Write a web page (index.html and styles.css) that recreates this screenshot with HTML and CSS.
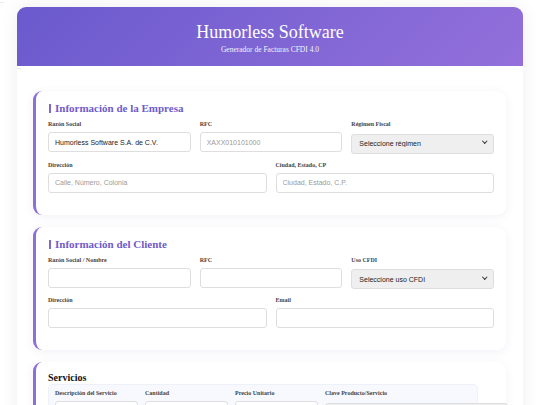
FILE: index.html
```html
<!DOCTYPE html>
<html lang="es">
<head>
<meta charset="utf-8">
<title>Humorless Software</title>
<link rel="stylesheet" href="styles.css">
</head>
<body>
<div class="dots">...</div>
<div class="container">
  <header class="header">
    <h1 class="title">Humorless Software</h1>
    <p class="subtitle">Generador de Facturas CFDI 4.0</p>
  </header>
  <div class="dots dots-inner">...</div>
  <main class="content">
    <section class="card">
      <h2 class="card-title">Información de la Empresa</h2>
      <div class="row row-3">
        <div class="group">
          <label class="label">Razón Social</label>
          <input class="field" type="text" value="Humorless Software S.A. de C.V.">
        </div>
        <div class="group">
          <label class="label">RFC</label>
          <input class="field" type="text" placeholder="XAXX010101000">
        </div>
        <div class="group">
          <label class="label">Régimen Fiscal</label>
          <div class="select-wrap"><select class="field select"><option>Seleccione régimen</option></select></div>
        </div>
      </div>
      <div class="row row-2">
        <div class="group">
          <label class="label">Dirección</label>
          <input class="field" type="text" placeholder="Calle, Número, Colonia">
        </div>
        <div class="group">
          <label class="label">Ciudad, Estado, CP</label>
          <input class="field" type="text" placeholder="Ciudad, Estado, C.P.">
        </div>
      </div>
    </section>

    <section class="card">
      <h2 class="card-title">Información del Cliente</h2>
      <div class="row row-3">
        <div class="group">
          <label class="label">Razón Social / Nombre</label>
          <input class="field" type="text">
        </div>
        <div class="group">
          <label class="label">RFC</label>
          <input class="field" type="text">
        </div>
        <div class="group">
          <label class="label">Uso CFDI</label>
          <div class="select-wrap"><select class="field select"><option>Seleccione uso CFDI</option></select></div>
        </div>
      </div>
      <div class="row row-2">
        <div class="group">
          <label class="label">Dirección</label>
          <input class="field" type="text">
        </div>
        <div class="group">
          <label class="label">Email</label>
          <input class="field" type="email">
        </div>
      </div>
    </section>

    <section class="card card-services">
      <h3 class="services-title">Servicios</h3>
      <div class="service-box">
        <div class="service-row">
          <div class="group">
            <label class="label">Descripción del Servicio</label>
            <input class="field" type="text">
          </div>
          <div class="group">
            <label class="label">Cantidad</label>
            <input class="field" type="text">
          </div>
          <div class="group">
            <label class="label">Precio Unitario</label>
            <input class="field" type="text">
          </div>
          <div class="group">
            <label class="label">Clave Producto/Servicio</label>
            <div class="select-wrap wide"><select class="field select"><option></option></select></div>
          </div>
        </div>
      </div>
    </section>
  </main>
</div>
</body>
</html>
```

FILE: styles.css
```css
* {
  box-sizing: border-box;
}

html, body {
  margin: 0;
  padding: 0;
  background: #ffffff;
  overflow: hidden;
}

body {
  font-family: "Liberation Serif", "Times New Roman", serif;
  color: #333;
}

.dots {
  font-family: "Liberation Sans", Arial, sans-serif;
  font-size: 4px;
  line-height: 4px;
  height: 7px;
  color: #777;
  letter-spacing: 0.3px;
}

.dots-inner {
  height: 4px;
}

.container {
  width: 506px;
  margin: 0 auto;
  background: #fff;
  border-radius: 9px 9px 0 0;
  box-shadow: 0 0 18px rgba(0, 0, 0, 0.07);
  min-height: 420px;
}

.header {
  background: linear-gradient(135deg, #6a5acd 0%, #9370db 100%);
  border-radius: 9px 9px 0 0;
  color: #fff;
  text-align: center;
  padding: 15px 0 0;
  height: 59px;
}

.title {
  margin: 0;
  font-weight: normal;
  font-size: 18px;
  line-height: 21px;
}

.subtitle {
  margin: 2px 0 0;
  font-size: 7.5px;
  line-height: 9px;
  opacity: 0.92;
}

.content {
  padding: 21px 17px 0 16px;
}

.card {
  background: #fff;
  border-radius: 9px;
  border-left: 3px solid #8c6fd8;
  box-shadow: 0 2px 10px rgba(90, 80, 160, 0.08);
  padding: 11px 12px 14px 12px;
  margin-bottom: 12px;
}

.card-title {
  position: relative;
  margin: 0 0 6px;
  padding-left: 7px;
  font-size: 11px;
  line-height: 13px;
  font-weight: bold;
  color: #6f5bc9;
}

.card-title::before {
  content: "";
  position: absolute;
  left: 1px;
  top: 2px;
  width: 1.5px;
  height: 9px;
  background: #7b68d6;
}

.row {
  display: grid;
  gap: 9px;
}

.row-3 {
  grid-template-columns: 1fr 1fr 1fr;
}

.row-2 {
  grid-template-columns: 1fr 1fr;
}

.group {
  display: flex;
  flex-direction: column;
  margin-bottom: 8px;
  min-width: 0;
}

.label {
  display: block;
  font-size: 6px;
  line-height: 7px;
  font-weight: bold;
  color: #444;
  margin-bottom: 4px;
}

.field {
  width: 100%;
  height: 20px;
  border: 1px solid #dedede;
  border-radius: 3px;
  background: #fff;
  padding: 0 6px;
  font-family: "Liberation Sans", Arial, sans-serif;
  font-size: 7px;
  color: #222;
  outline: none;
}

.field::placeholder {
  color: #9a9a9a;
}

.select-wrap {
  position: relative;
}

.select-wrap::after {
  content: "";
  position: absolute;
  right: 8px;
  top: 7px;
  width: 2.5px;
  height: 2.5px;
  border-right: 1.2px solid #333;
  border-bottom: 1.2px solid #333;
  transform: rotate(45deg);
  pointer-events: none;
}

.select {
  -webkit-appearance: none;
  appearance: none;
  background-color: #efefef;
  color: #222;
  padding: 0 7px;
}

.card-services {
  padding-top: 10px;
}

.services-title {
  margin: 0;
  font-size: 10px;
  line-height: 12px;
  font-weight: bold;
  color: #111;
}

.service-box {
  background: #f8f9ff;
  border-radius: 5px;
  border: 1px solid #eef0fa;
  padding: 5px 6px;
  margin-right: 16px;
}

.service-row {
  display: grid;
  grid-template-columns: 83px 83px 83px 83px;
  gap: 7px;
}

.wide {
  width: 183px;
}

.wide::after {
  display: none;
}
```
